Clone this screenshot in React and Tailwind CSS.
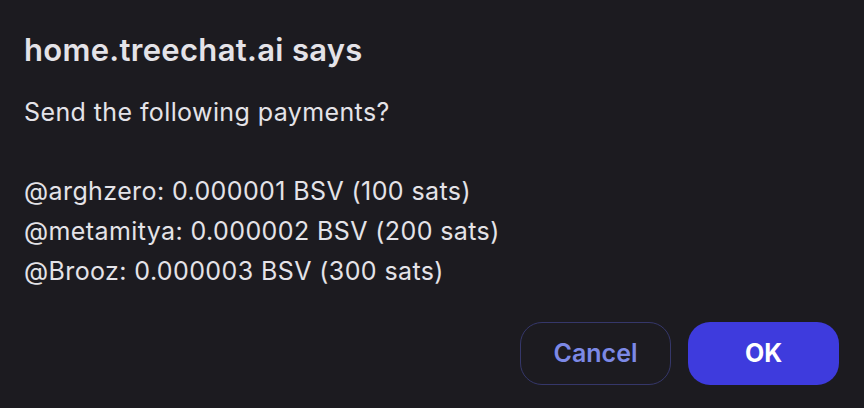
import React from 'react'

const payments = [
  '@arghzero: 0.000001 BSV (100 sats)',
  '@metamitya: 0.000002 BSV (200 sats)',
  '@Brooz: 0.000003 BSV (300 sats)',
]

const App = () => {
  return (
    <div className="w-[864px] h-[408px] bg-[#1c1b20] text-[#e4e3e8] flex flex-col px-6 pt-[30px] pb-[23px] font-['Inter',sans-serif]">
      <h1 className="text-[31px] leading-[40px] font-semibold tracking-[0.01em]">home.treechat.ai says</h1>
      <div className="mt-[22px] text-[25px] leading-[39px] tracking-[0.016em]">
        <p className="leading-[40px]">Send the following payments?</p>
        <p>&nbsp;</p>
        {payments.map((line) => (
          <p key={line} className="leading-[40px]">{line}</p>
        ))}
      </div>
      <div className="mt-auto flex justify-end gap-[17px] pr-px">
        <button className="w-[151px] h-[63px] rounded-[22px] border border-[#35376a] text-[#7c89e6] text-[25px] font-semibold">
          Cancel
        </button>
        <button className="w-[151px] h-[63px] rounded-[22px] bg-[#3e3bdd] text-white text-[25px] font-bold">
          OK
        </button>
      </div>
    </div>
  )
}

export default App
